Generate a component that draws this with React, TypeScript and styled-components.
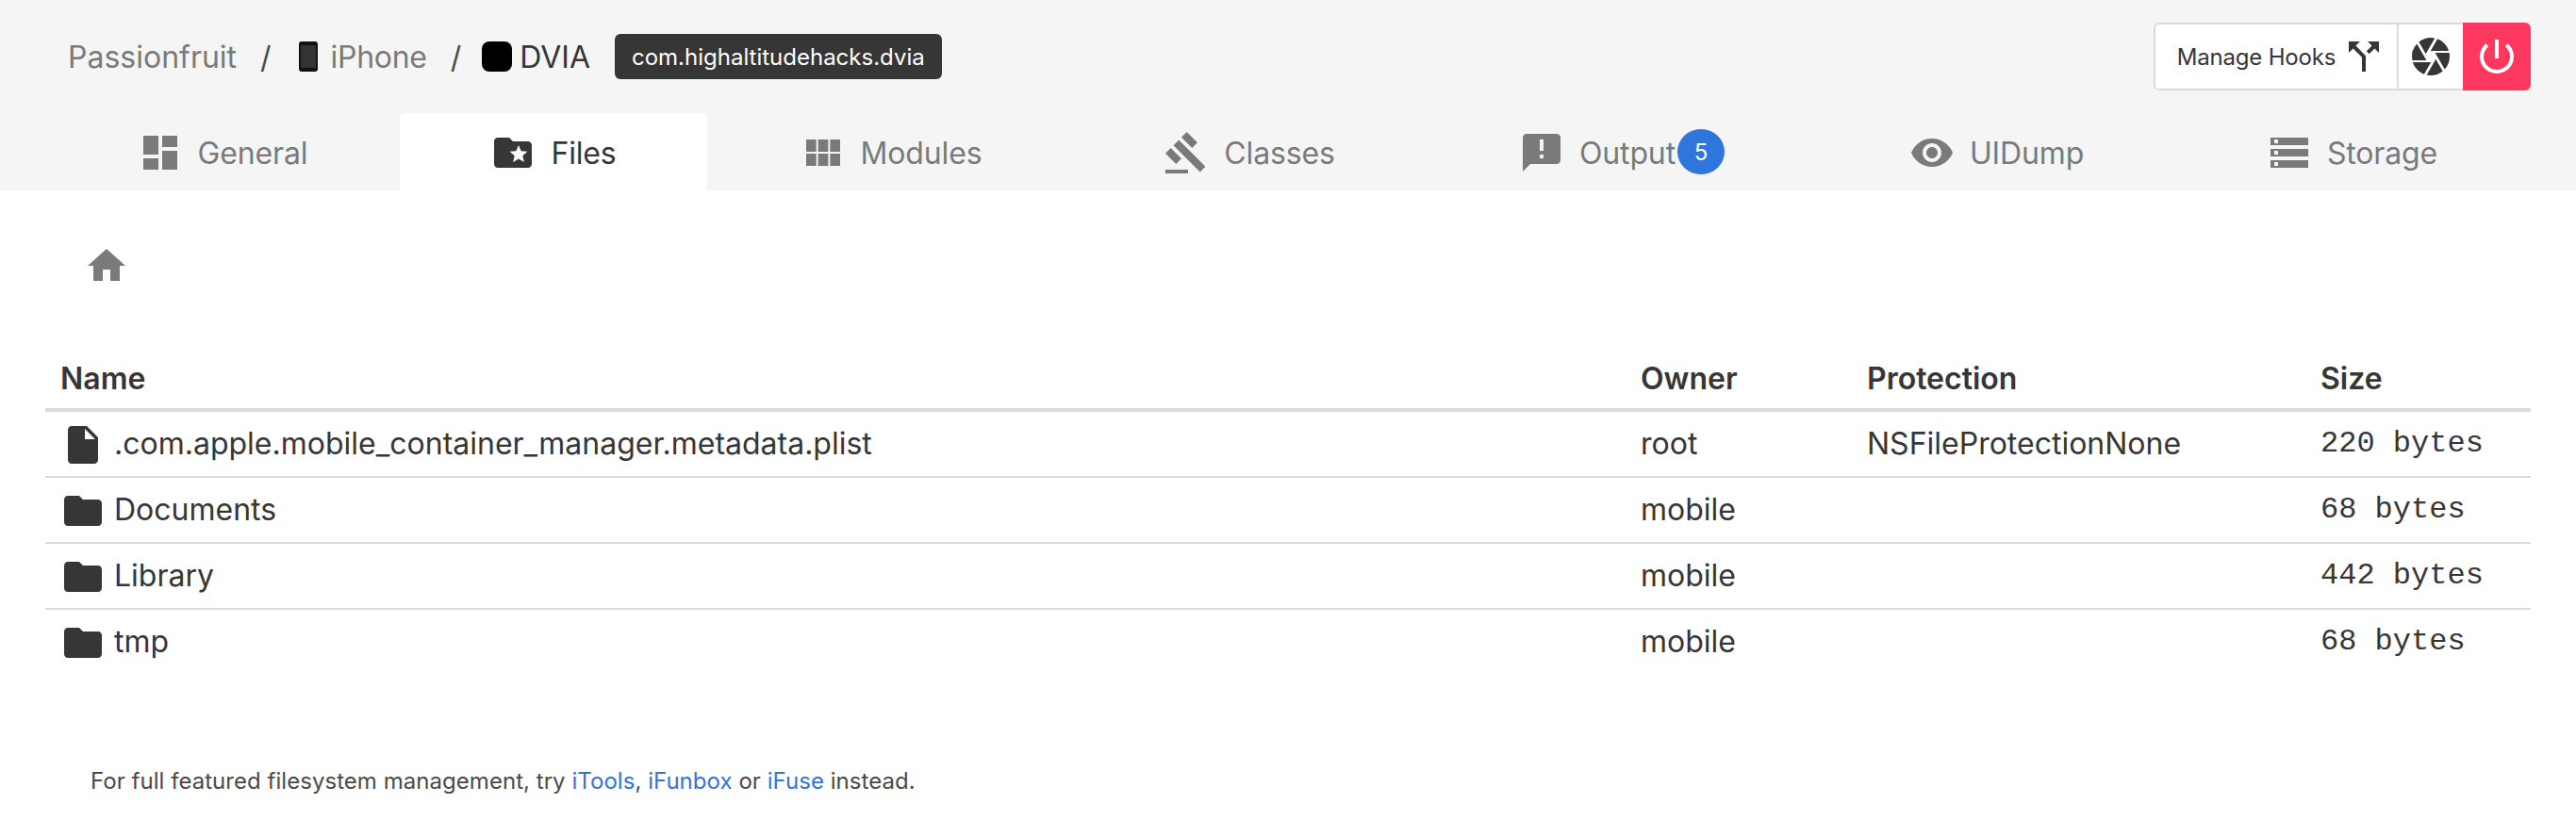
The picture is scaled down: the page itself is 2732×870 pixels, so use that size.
import { createGlobalStyle, styled } from 'styled-components';
import {
  MdAnnouncement,
  MdCallSplit,
  MdCamera,
  MdDashboard,
  MdFolder,
  MdFolderSpecial,
  MdGavel,
  MdHome,
  MdInsertDriveFile,
  MdPowerSettingsNew,
  MdRemoveRedEye,
  MdStorage,
  MdViewModule,
} from 'react-icons/md';

const GlobalStyle = createGlobalStyle`
  html, body {
    margin: 0;
    background: #fff;
    overflow: hidden;
  }
  body {
    font-family: Inter, "Noto Sans", sans-serif;
    color: #363636;
  }
`;

const tabs = [
  { label: 'General', icon: <MdDashboard /> },
  { label: 'Files', icon: <MdFolderSpecial />, active: true },
  { label: 'Modules', icon: <MdViewModule /> },
  { label: 'Classes', icon: <MdGavel /> },
  { label: 'Output', icon: <MdAnnouncement />, badge: 5 },
  { label: 'UIDump', icon: <MdRemoveRedEye /> },
  { label: 'Storage', icon: <MdStorage /> },
];

const files = [
  { name: '.com.apple.mobile_container_manager.metadata.plist', owner: 'root', protection: 'NSFileProtectionNone', size: '220 bytes', isFile: true },
  { name: 'Documents', owner: 'mobile', protection: '', size: '68 bytes' },
  { name: 'Library', owner: 'mobile', protection: '', size: '442 bytes' },
  { name: 'tmp', owner: 'mobile', protection: '', size: '68 bytes' },
];

export default function App() {
  return (
    <Page>
      <GlobalStyle />
      <Header>
        <TopBar>
          <Breadcrumb>
            <Crumb>Passionfruit</Crumb>
            <Slash>/</Slash>
            <Crumb>
              <PhoneIcon />
              <PhoneName>iPhone</PhoneName>
            </Crumb>
            <Slash>/</Slash>
            <Crumb $current>
              <AppIcon />
              DVIA
            </Crumb>
            <BundleTag>com.highaltitudehacks.dvia</BundleTag>
          </Breadcrumb>
          <ButtonGroup>
            <HookButton>
              Manage Hooks
              <MdCallSplit />
            </HookButton>
            <CameraButton>
              <MdCamera />
            </CameraButton>
            <PowerButton>
              <MdPowerSettingsNew />
            </PowerButton>
          </ButtonGroup>
        </TopBar>
        <TabList>
          {tabs.map((tab) => (
            <Tab key={tab.label} $active={tab.active}>
              <TabIcon>{tab.icon}</TabIcon>
              {tab.label}
              {tab.badge && <Badge>{tab.badge}</Badge>}
            </Tab>
          ))}
        </TabList>
      </Header>

      <Content>
        <HomeLink>
          <MdHome />
        </HomeLink>
        <FileTable>
          <colgroup>
            <col width={1676} />
            <col width={240} />
            <col width={481} />
            <col width={239} />
          </colgroup>
          <thead>
            <tr>
              <th>Name</th>
              <th>Owner</th>
              <th>Protection</th>
              <th>Size</th>
            </tr>
          </thead>
          <tbody>
            {files.map((file) => (
              <tr key={file.name}>
                <td>
                  <NameCell>
                    <FileIcon>{file.isFile ? <MdInsertDriveFile /> : <MdFolder />}</FileIcon>
                    {file.name}
                  </NameCell>
                </td>
                <td>{file.owner}</td>
                <td>{file.protection}</td>
                <SizeCell>{file.size}</SizeCell>
              </tr>
            ))}
          </tbody>
        </FileTable>
        <Hint>
          For full featured filesystem management, try <a href="#itools">iTools</a>,{' '}
          <a href="#ifunbox">iFunbox</a> or <a href="#ifuse">iFuse</a> instead.
        </Hint>
      </Content>
    </Page>
  );
}

const Page = styled.div`
  width: 2732px;
  height: 870px;
  overflow: hidden;
`;

const Header = styled.header`
  background: #f5f5f5;
  height: 202px;
  display: flex;
  flex-direction: column;
`;

const TopBar = styled.div`
  height: 120px;
  padding: 24px 48px 0 72px;
  box-sizing: border-box;
  display: flex;
  justify-content: space-between;
  align-items: flex-start;
`;

const Breadcrumb = styled.nav`
  display: flex;
  align-items: center;
  height: 72px;
  font-size: 32px;
`;

const Crumb = styled.span<{ $current?: boolean }>`
  display: flex;
  align-items: center;
  color: ${(p) => (p.$current ? '#363636' : '#7a7a7a')};
`;

const PhoneName = styled.span`
  letter-spacing: -0.3px;
`;

const Slash = styled.span`
  color: #4a4a4a;
  margin: 0 24px 0 25px;
`;

const PhoneIcon = styled.i`
  width: 20px;
  height: 32px;
  margin: 0 14px 0 5px;
  box-sizing: border-box;
  border: 4px solid #111;
  border-width: 4px 2px;
  border-radius: 3px;
  background: #333;
`;

const AppIcon = styled.i`
  width: 32px;
  height: 32px;
  margin: 0 8px 0 -2px;
  border-radius: 8px;
  background: #000;
`;

const BundleTag = styled.span`
  margin-left: 26px;
  height: 48px;
  padding: 0 18px;
  display: flex;
  align-items: center;
  background: #363636;
  color: #fff;
  border-radius: 6px;
  font-size: 24px;
`;

const ButtonGroup = styled.div`
  display: flex;
  height: 72px;
`;

const GroupButton = styled.button`
  height: 72px;
  box-sizing: border-box;
  display: flex;
  align-items: center;
  justify-content: center;
  font: inherit;
  background: #fff;
  color: #363636;
  border: 2px solid #dbdbdb;
  padding: 0;
  svg {
    width: 48px;
    height: 48px;
  }
`;

const HookButton = styled(GroupButton)`
  width: 260px;
  padding-left: 12px;
  font-size: 24px;
  letter-spacing: -0.2px;
  gap: 6px;
  border-radius: 6px 0 0 6px;
`;

const CameraButton = styled(GroupButton)`
  width: 70px;
  margin-left: -2px;
  border-left-width: 2px;
  border-right: none;
`;

const PowerButton = styled(GroupButton)`
  width: 72px;
  background: #ff3860;
  border-color: #ff3860;
  color: #fff;
  border-radius: 0 6px 6px 0;
`;

const TabList = styled.div`
  display: grid;
  grid-template-columns: 376px 326px 390px 370px 420px 375px 379px;
  padding: 0 48px;
  height: 82px;
`;

const Tab = styled.a<{ $active?: boolean }>`
  display: flex;
  align-items: center;
  justify-content: center;
  padding-top: 2px;
  font-size: 32px;
  letter-spacing: -0.15px;
  color: ${(p) => (p.$active ? '#363636' : '#7a7a7a')};
  background: ${(p) => (p.$active ? '#fff' : 'transparent')};
  border-radius: 6px 6px 0 0;
`;

const TabIcon = styled.span`
  display: flex;
  margin-right: 16px;
  svg {
    width: 48px;
    height: 48px;
  }
`;

const Badge = styled.span`
  width: 50px;
  height: 48px;
  margin-left: 2px;
  margin-top: -2px;
  border-radius: 50%;
  background: #2e75dc;
  color: #fff;
  font-size: 24px;
  display: flex;
  align-items: center;
  justify-content: center;
`;

const Content = styled.main`
  padding: 56px 48px 0;
`;

const HomeLink = styled.a`
  display: flex;
  width: 48px;
  height: 48px;
  margin-left: 41px;
  color: #7a7a7a;
  svg {
    width: 48px;
    height: 48px;
  }
`;

const FileTable = styled.table`
  width: 2636px;
  margin-top: 61px;
  border-collapse: collapse;
  table-layout: fixed;
  font-size: 32px;
  th {
    height: 64px;
    padding: 2px 16px 0;
    text-align: left;
    font-weight: 600;
    color: #363636;
    border-bottom: 4px solid #dbdbdb;
  }
  td {
    height: 66px;
    padding: 0 16px 2px;
    border-bottom: 2px solid #dbdbdb;
  }
  tbody tr:last-child td {
    border-bottom: none;
  }
`;

const NameCell = styled.div`
  display: flex;
  align-items: center;
`;

const FileIcon = styled.span`
  display: flex;
  margin: 2px 9px -2px 0;
  svg {
    width: 48px;
    height: 48px;
  }
`;

const SizeCell = styled.td`
  font-family: "Liberation Mono", monospace;
`;

const Hint = styled.p`
  margin: 99px 0 0 48px;
  font-size: 24px;
  letter-spacing: 0.04px;
  color: #4a4a4a;
  a {
    color: #3273dc;
    text-decoration: none;
  }
`;
